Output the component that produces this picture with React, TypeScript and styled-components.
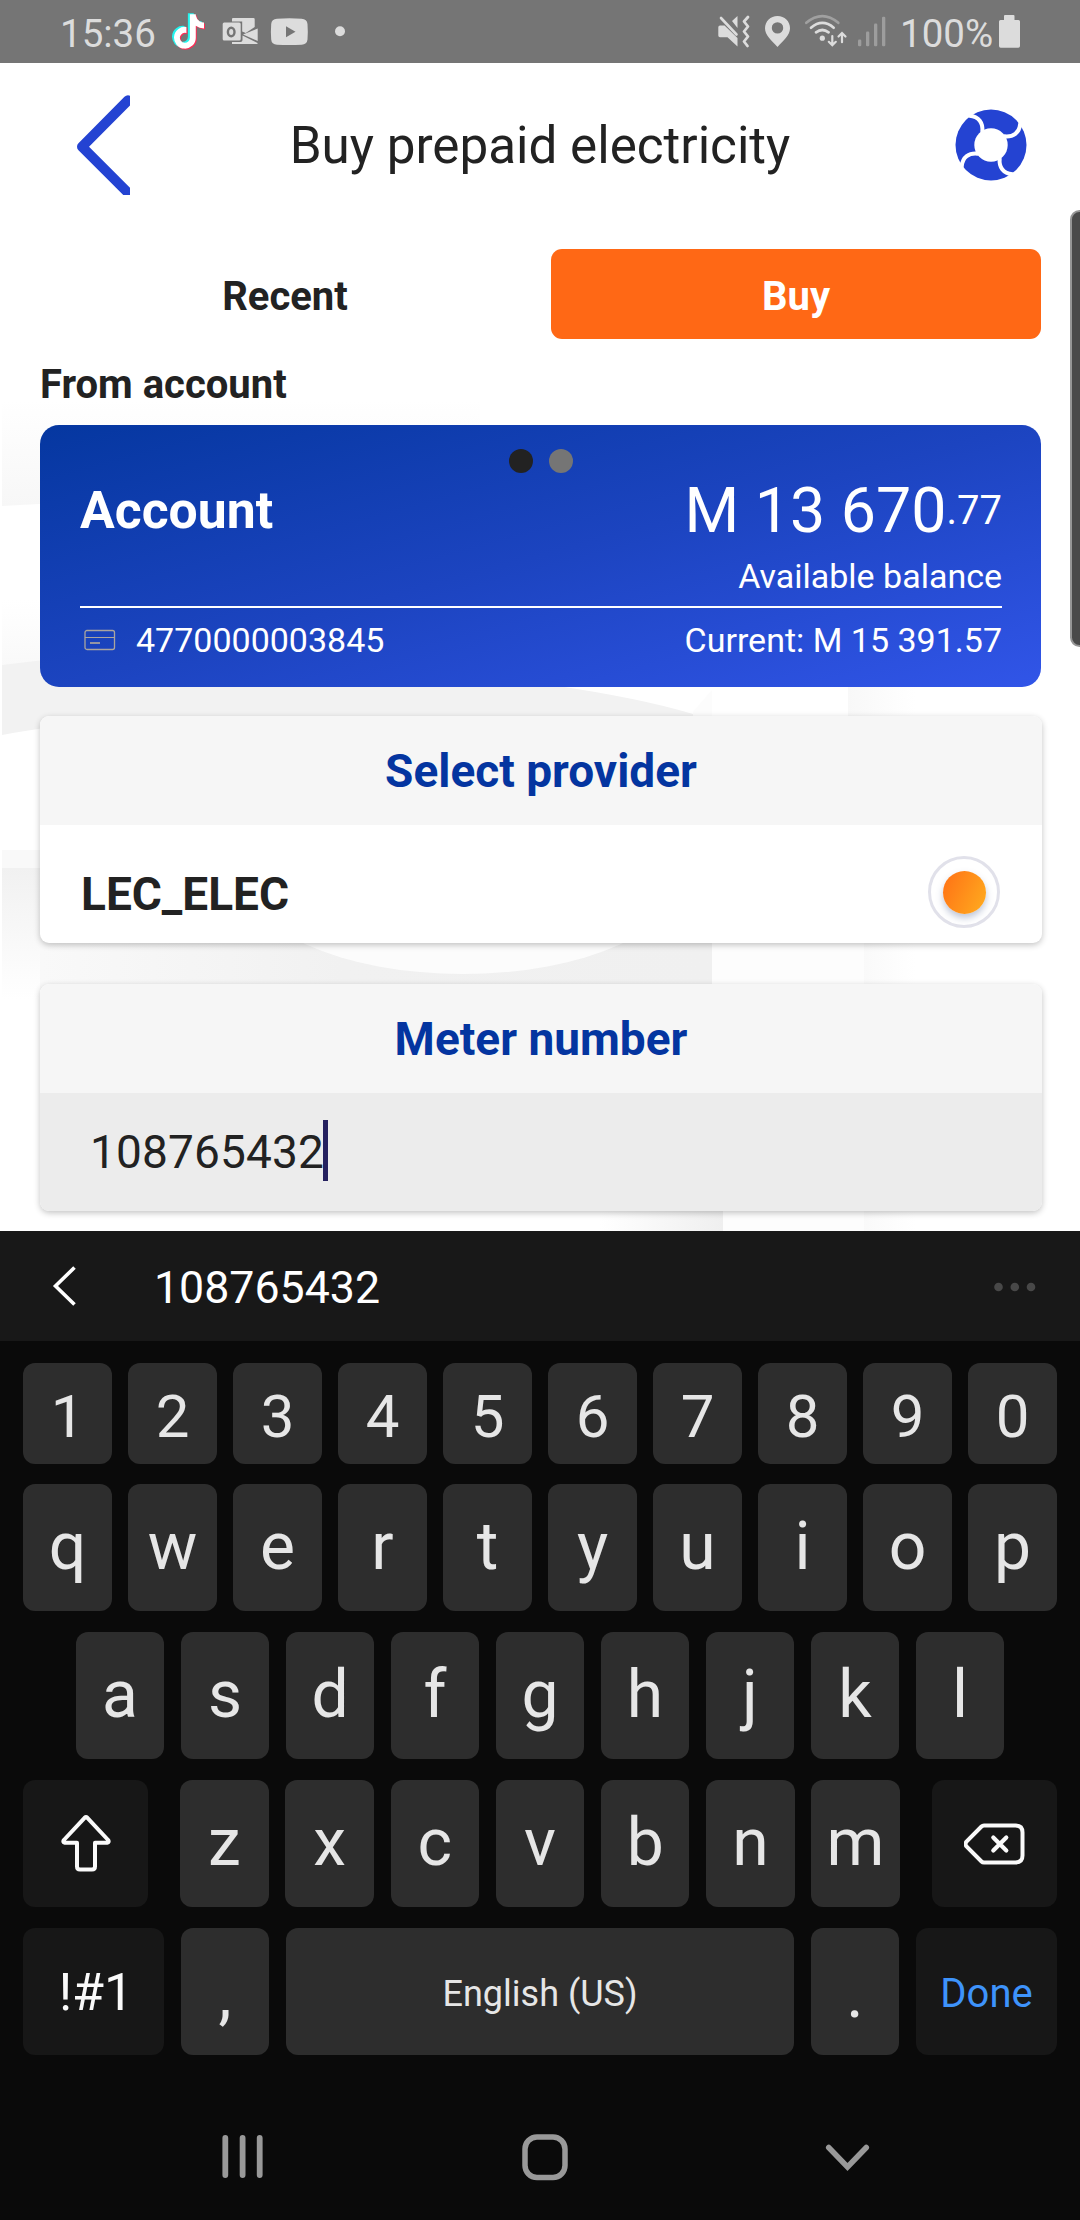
import React from 'react';
import styled, { createGlobalStyle } from 'styled-components';
import { FaTiktok } from 'react-icons/fa6';

const GlobalStyle = createGlobalStyle`
  * { box-sizing: border-box; }
  body { margin: 0; background: #ffffff; }
`;

const Screen = styled.div`
  position: relative;
  width: 1080px;
  height: 2220px;
  display: flex;
  flex-direction: column;
  overflow: hidden;
  background: #fff;
  color: #222;
  font-family: Roboto, 'Liberation Sans', sans-serif;
  white-space: nowrap;
`;

/* ---------- status bar ---------- */

const StatusBar = styled.div`
  flex: none;
  height: 63px;
  display: flex;
  align-items: flex-start;
  justify-content: space-between;
  padding: 0 58px 0 60px;
  background: #757575;
  color: #dcdcdc;
`;

const StatusGroup = styled.div`
  display: flex;
  align-items: flex-start;
  height: 63px;
`;

const StatusText = styled.span<{ $width: number; $indent?: number }>`
  width: ${(p) => p.$width}px;
  padding-left: ${(p) => p.$indent ?? 0}px;
  font-size: 38.500px;
  line-height: 68px;
`;

const StatusSvg = styled.svg`
  display: block;
  flex: none;
`;

const TikTok = styled.span`
  position: relative;
  width: 51px;
  height: 63px;
`;

const TikTokLayer = styled(FaTiktok)<{ $dx: number; $dy: number }>`
  position: absolute;
  left: ${(p) => 5 + p.$dx}px;
  top: ${(p) => 14 + p.$dy}px;
  width: 30px;
  height: 35px;
`;

/* ---------- app page ---------- */

const Page = styled.main`
  position: relative;
  flex: none;
  height: 1168px;
  display: flex;
  flex-direction: column;
  padding: 0 39px 0 40px;
`;

const Backdrop = styled.svg`
  position: absolute;
  left: 0;
  top: 0;
`;

const Header = styled.header`
  position: relative;
  height: 186px;
  display: flex;
  align-items: flex-start;
  justify-content: space-between;
  padding: 31px 13px 0 37px;
`;

const Title = styled.h1`
  margin: 0;
  padding-right: 4px;
  font-size: 51.200px;
  font-weight: 400;
  line-height: 104px;
`;

const Tabs = styled.div`
  position: relative;
  display: grid;
  grid-template-columns: 490px 490px;
  justify-content: space-between;
  height: 90px;
`;

const Tab = styled.button<{ $active?: boolean }>`
  border: 0;
  border-radius: 11px;
  padding: 5px 0 0;
  background: ${(p) => (p.$active ? '#ff6815' : 'transparent')};
  color: ${(p) => (p.$active ? '#fff' : '#222')};
  font: 700 40px/85px Roboto, sans-serif;
`;

const SectionLabel = styled.div`
  position: relative;
  height: 86px;
  padding-top: 5px;
  font-size: 40px;
  font-weight: 700;
  line-height: 82px;
`;

const AccountCard = styled.section`
  position: relative;
  height: 262px;
  width: 1001px;
  padding: 24px 39px 0 40px;
  border-radius: 19px;
  background: linear-gradient(165deg, #0537a0 0%, #1c44c0 50%, #3155e8 100%);
  color: #fff;
`;

const Pager = styled.div`
  display: flex;
  justify-content: center;
  gap: 16px;
  height: 24px;
`;

const PagerDot = styled.i<{ $on?: boolean }>`
  width: 24px;
  height: 24px;
  border-radius: 50%;
  background: ${(p) => (p.$on ? '#222' : '#757575')};
`;

const Balance = styled.div`
  display: flex;
  align-items: center;
  justify-content: space-between;
  height: 75px;
`;

const AccountName = styled.strong`
  font-size: 51.700px;
  line-height: 75px;
`;

const Amount = styled.div`
  display: flex;
  align-items: center;
  font-size: 62.700px;
  line-height: 76px;
`;

const Cents = styled.span`
  font-size: 40px;
  line-height: 75px;
`;

const Caption = styled.div`
  height: 58px;
  text-align: right;
  font-size: 34px;
  line-height: 57px;
`;

const AccountFoot = styled.div`
  display: flex;
  align-items: center;
  justify-content: space-between;
  height: 66px;
  border-top: 2px solid #fff;
  font-size: 34px;
`;

const AccountNumber = styled.span`
  display: flex;
  align-items: center;
  gap: 20px;
  padding-left: 4px;
`;

const Panel = styled.section<{ $gap: number }>`
  position: relative;
  width: 1002px;
  height: 227px;
  margin-top: ${(p) => p.$gap}px;
  border-radius: 9px;
  background: #fff;
  box-shadow: 0 2px 6px rgba(0, 0, 0, 0.24);
  overflow: hidden;
`;

const PanelTitle = styled.h2`
  margin: 0;
  height: 109px;
  background: #f6f6f6;
  color: #0435a0;
  text-align: center;
  font-size: 46px;
  font-weight: 700;
  line-height: 110px;
`;

const Provider = styled.div`
  display: flex;
  align-items: center;
  justify-content: space-between;
  height: 118px;
  padding: 20px 42px 0 41px;
  font-size: 46px;
  font-weight: 700;
`;

const Radio = styled.span`
  display: flex;
  align-items: center;
  justify-content: center;
  width: 72px;
  height: 72px;
  margin-top: -4px;
  border: 3px solid #e1e1ea;
  border-radius: 50%;

  &::after {
    content: '';
    width: 43px;
    height: 43px;
    border-radius: 50%;
    background: linear-gradient(115deg, #ff7015, #ffad1f);
    box-shadow: 0 4px 7px rgba(70, 90, 140, 0.35);
  }
`;

const MeterField = styled.div`
  display: flex;
  align-items: center;
  height: 118px;
  padding: 0 0 1px 50px;
  background: #ececec;
  font-size: 46px;
  letter-spacing: 0.150px;
`;

const Caret = styled.i`
  width: 5px;
  height: 61px;
  margin: 0 0 3px -1px;
  background: #25215f;
`;

const EdgeHandle = styled.div`
  position: absolute;
  right: -9px;
  top: 210px;
  width: 19px;
  height: 437px;
  border: 2px solid #969696;
  border-radius: 12px;
  background: #4a4a4a;
`;

/* ---------- keyboard ---------- */

const Keyboard = styled.section`
  flex: 1;
  display: flex;
  flex-direction: column;
  background: #0a0a0a;
`;

const Suggestions = styled.div`
  display: flex;
  align-items: center;
  height: 110px;
  padding: 2px 43px 0 51px;
  background: #181818;
  color: #fff;
  font-size: 44.700px;
`;

const Suggestion = styled.span`
  flex: 1;
  padding: 2px 0 0 75px;
`;

const Keys = styled.div`
  display: flex;
  flex-direction: column;
  gap: 21px;
  padding: 22px 23px 0;
`;

const KeyRow = styled.div<{ $height: number; $gap: number; $inset?: number; $pull?: number }>`
  display: flex;
  height: ${(p) => p.$height}px;
  gap: ${(p) => p.$gap}px;
  padding: 0 ${(p) => p.$inset ?? 0}px;
  margin-top: ${(p) => p.$pull ?? 0}px;
`;

const Key = styled.button<{
  $w: number;
  $size?: number;
  $shift?: number;
  $indent?: number;
  $special?: boolean;
  $color?: string;
}>`
  flex: none;
  display: flex;
  align-items: center;
  justify-content: center;
  width: ${(p) => p.$w}px;
  height: 100%;
  border: 0;
  border-radius: 12px;
  padding: ${(p) => Math.max(0, p.$shift ?? 0)}px 0 ${(p) => Math.max(0, -(p.$shift ?? 0))}px ${(p) => p.$indent ?? 0}px;
  background: ${(p) => (p.$special ? '#171717' : '#2d2d2d')};
  color: ${(p) => p.$color ?? '#e6e6e6'};
  font-family: Roboto, sans-serif;
  font-size: ${(p) => p.$size ?? 66}px;
  line-height: 1;
`;

const LowRow = styled(KeyRow)`
  justify-content: space-between;
`;

const LetterRun = styled.div`
  display: flex;
  gap: 16.800px;
`;

const NavBar = styled.nav`
  display: flex;
  justify-content: space-between;
  align-items: center;
  padding: 78px 209px 0 220px;
`;

/* ---------- icons ---------- */

const OutlookIcon = () => (
  <StatusSvg width="48" height="63" viewBox="219 0 48 63">
    <path d="M233 18h20.500a1.200 1.200 0 0 1 1.200 1.200V27l-9 6-3.500-1.500V21.500H232v-2.500a1 1 0 0 1 1-1z" fill="#dcdcdc" />
    <path d="M243 34.500l14.700-6v12.500z M232 42h8.500a2 2 0 0 0 2-2v-4.500L257.500 43v1H232z" fill="#dcdcdc" />
    <rect x="222.700" y="22.500" width="18" height="18" rx="1.500" fill="#dcdcdc" />
    <ellipse cx="231.200" cy="32" rx="3.300" ry="4.200" fill="none" stroke="#757575" strokeWidth="2.400" />
  </StatusSvg>
);

const YouTubeIcon = () => (
  <StatusSvg width="60" height="63" viewBox="267 0 60 63">
    <path d="M277 18.700q12.300-.800 24.600 0q5.400.300 5.900 5.300q.600 7.500 0 15.500q-.500 5-5.900 5.300q-12.300.600-24.600 0q-5.400-.300-5.800-5.300q-.600-8 0-15.500q.400-5 5.800-5.300z" fill="#dcdcdc" />
    <path d="M286 26.300l9.500 5.500-9.500 5.400z" fill="#757575" />
  </StatusSvg>
);

const MoreDot = () => (
  <StatusSvg width="20" height="63" viewBox="327 0 20 63">
    <circle cx="340" cy="31.200" r="5" fill="#dcdcdc" />
  </StatusSvg>
);

const MuteVibrateIcon = () => (
  <StatusSvg width="45" height="63" viewBox="715 0 45 63">
    <path d="M720 25.500h4.500L737.500 38v8.500L727.500 37.300H720a1.700 1.700 0 0 1-1.700-1.700v-8.400a1.700 1.700 0 0 1 1.700-1.700z M732 21l5.500-5v12z" fill="#dcdcdc" />
    <path d="M721 18l15.500 16.500" stroke="#dcdcdc" strokeWidth="2.600" strokeLinecap="round" />
    <path d="M748 17l-4 4.500 4 5-4 5 4 5-4 5 3.500 4.500" fill="none" stroke="#dcdcdc" strokeWidth="2.800" strokeLinecap="round" strokeLinejoin="round" />
  </StatusSvg>
);

const PinIcon = () => (
  <StatusSvg width="40" height="63" viewBox="760 0 40 63">
    <path fillRule="evenodd" d="M777.500 16c7 0 12.500 5.400 12.500 12.300 0 7-6.500 12.200-12.500 18.700-6-6.500-12.500-11.700-12.500-18.700C765 21.400 770.500 16 777.500 16zm0 6.200a5.700 5.700 0 1 0 0 11.400 5.700 5.700 0 0 0 0-11.400z" fill="#dcdcdc" />
  </StatusSvg>
);

const WifiIcon = () => (
  <StatusSvg width="52" height="63" viewBox="800 0 52 63" fill="none" strokeWidth="2.700" strokeLinecap="round">
    <path d="M806.300 22.800q16-13.400 32 0" stroke="#a0a0a0" />
    <path d="M811 27.700q11.300-9.500 22.700 0M816 32.300q6.300-4.600 12.600 0" stroke="#dcdcdc" />
    <circle cx="822.300" cy="38.200" r="2.600" fill="#dcdcdc" />
    <path d="M832.300 36v9M828.800 41.800l3.500 3.500 3.500-3.500M842 42.200v-9M838.500 36.500l3.500-3.500 3.500 3.500" stroke="#dcdcdc" strokeWidth="2.200" />
  </StatusSvg>
);

const SignalIcon = () => (
  <StatusSvg width="46" height="63" viewBox="852 0 46 63" fill="#9d9d9d">
    <rect x="858" y="39.500" width="3.300" height="6.700" rx="1.300" />
    <rect x="866" y="31.500" width="3.300" height="14.700" rx="1.300" />
    <rect x="874" y="23.500" width="3.300" height="22.700" rx="1.300" />
    <rect x="882" y="16.700" width="3.300" height="29.500" rx="1.300" />
  </StatusSvg>
);

const BatteryIcon = () => (
  <StatusSvg width="24" height="63" viewBox="998 0 24 63">
    <path d="M1006 15h7.500a1 1 0 0 1 1 1v4h4a1.500 1.500 0 0 1 1.500 1.500v24.500a1.700 1.700 0 0 1-1.700 1.700h-17.600a1.700 1.700 0 0 1-1.700-1.700V21.500a1.500 1.500 0 0 1 1.500-1.500h3.500v-4a1 1 0 0 1 1-1z" fill="#dcdcdc" />
  </StatusSvg>
);

const BackIcon = () => (
  <svg width="53" height="101" viewBox="77 94 53 101">
    <path d="M128 100.300L82 146.700L128 192.700" fill="none" stroke="#2443d2" strokeWidth="10" strokeLinecap="round" strokeLinejoin="round" />
  </svg>
);

const SWIRL = 'M-21.500-29.300C-12-28.500-7.800-22-8.700-13.500';

const LogoIcon = () => (
  <svg width="74" height="102" viewBox="-37 -51 74 102">
    <circle r="35.500" fill="#2443d2" />
    <circle r="16.700" fill="#fff" />
    {[0, 90, 180, 270].map((angle) => (
      <path key={angle} d={SWIRL} transform={`rotate(${angle})`} fill="none" stroke="#fff" strokeWidth="4" strokeLinecap="round" />
    ))}
  </svg>
);

const CardIcon = () => (
  <svg width="32" height="22" viewBox="0 0 32 22" fill="none" stroke="#aaa59f">
    <rect x="1" y="1.500" width="29.500" height="19" rx="2" strokeWidth="1.300" />
    <path d="M1 8.500h30" strokeWidth="1" />
    <path d="M6 14h10" strokeWidth="1.700" />
  </svg>
);

const PageBackdrop = () => (
  <Backdrop width="1080" height="1168" viewBox="0 63 1080 1168">
    <defs>
      <linearGradient id="haze" x1="0" y1="0" x2="0" y2="1">
        <stop offset="0" stopColor="#fff" />
        <stop offset="1" stopColor="#f7f7f7" />
      </linearGradient>
      <linearGradient id="bowl" x1="0" y1="0" x2="0" y2="1">
        <stop offset="0" stopColor="#f1f1f1" />
        <stop offset="1" stopColor="#fff" />
      </linearGradient>
      <linearGradient id="sweep" x1="0" y1="0" x2="1" y2="0">
        <stop offset="0" stopColor="#f9f9f9" />
        <stop offset="0.450" stopColor="#f1f1f1" />
        <stop offset="1" stopColor="#f0f0f0" />
      </linearGradient>
      <linearGradient id="column" x1="0" y1="0" x2="1" y2="0">
        <stop offset="0" stopColor="#f8f8f8" />
        <stop offset="1" stopColor="#fff" />
      </linearGradient>
      <linearGradient id="stem" x1="0" y1="0" x2="1" y2="0">
        <stop offset="0" stopColor="#fff" />
        <stop offset="1" stopColor="#efefef" />
      </linearGradient>
    </defs>
    <path d="M2 400H480V480L2 506z" fill="url(#haze)" />
    <path d="M2 600H200V690H2z" fill="url(#haze)" />
    <path d="M2 665C200 640 420 640 551 685Q640 698 693 714V760H300C180 715 80 720 2 735z" fill="#f2f2f2" />
    <path d="M693 712L712 690V984H693z" fill="#fcfcfc" />
    <path d="M2 850H300V880H2z" fill="#f9f9f9" />
    <path d="M2 868H40V1000H2z" fill="url(#bowl)" />
    <path d="M40 868H712V990H40z" fill="url(#sweep)" />
    <ellipse cx="463" cy="874" rx="221" ry="100" fill="#fcfcfc" />
    <path d="M712 900H864V1231H712z" fill="#fdfdfd" />
    <path d="M848 687H915V860H848z M864 860H915V1231H864z" fill="url(#column)" />
    <path d="M600 1150H723V1231H600z" fill="url(#stem)" />
  </Backdrop>
);

const ShiftIcon = () => (
  <svg width="50" height="58" viewBox="0 0 50 58">
    <path d="M23.600 2.800L2.900 25q-1.500 2.200 1 2.700H16V51.500q0 3 3 3h12q3 0 3-3V27.700H46.100q2.500-.500 1-2.700L26.400 2.800q-1.400-1.300-2.800 0z" fill="none" stroke="#fafafa" strokeWidth="4" strokeLinejoin="round" />
  </svg>
);

const DeleteIcon = () => (
  <svg width="62" height="44" viewBox="0 0 62 44">
    <path d="M20 3.500h31.500q7 0 7 7v23q0 7-7 7H20q-1.500 0-2.500-1L2.500 24.500q-2-2.500 0-5L17.500 4.500q1-1 2.500-1z" fill="none" stroke="#fafafa" strokeWidth="4" />
    <path d="M29.300 15.500l13 13M42.300 15.500l-13 13" stroke="#fafafa" strokeWidth="4.200" strokeLinecap="round" />
  </svg>
);

const digits = '1234567890'.split('');
const topLetters = 'qwertyuiop'.split('');
const midLetters = 'asdfghjkl'.split('');
const lowLetters = 'zxcvbnm'.split('');

export default function App() {
  return (
    <>
      <GlobalStyle />
      <Screen>
        <StatusBar>
          <StatusGroup>
            <StatusText $width={108}>15:36</StatusText>
            <TikTok>
              <TikTokLayer $dx={-0.8} $dy={-0.8} color="#25f4ee" />
              <TikTokLayer $dx={1.8} $dy={1.2} color="#fe2c55" />
              <TikTokLayer $dx={0.5} $dy={0.2} color="#fff" />
            </TikTok>
            <OutlookIcon />
            <YouTubeIcon />
            <MoreDot />
          </StatusGroup>
          <StatusGroup>
            <MuteVibrateIcon />
            <PinIcon />
            <WifiIcon />
            <SignalIcon />
            <StatusText $width={100} $indent={2}>100%</StatusText>
            <BatteryIcon />
          </StatusGroup>
        </StatusBar>

        <Page>
          <PageBackdrop />
          <Header>
            <BackIcon />
            <Title>Buy prepaid electricity</Title>
            <LogoIcon />
          </Header>
          <Tabs>
            <Tab>Recent</Tab>
            <Tab $active>Buy</Tab>
          </Tabs>
          <SectionLabel>From account</SectionLabel>
          <AccountCard>
            <Pager>
              <PagerDot $on />
              <PagerDot />
            </Pager>
            <Balance>
              <AccountName>Account</AccountName>
              <Amount>
                M 13 670<Cents>.77</Cents>
              </Amount>
            </Balance>
            <Caption>Available balance</Caption>
            <AccountFoot>
              <AccountNumber>
                <CardIcon />
                4770000003845
              </AccountNumber>
              <span>Current: M 15 391.57</span>
            </AccountFoot>
          </AccountCard>
          <Panel $gap={29}>
            <PanelTitle>Select provider</PanelTitle>
            <Provider>
              LEC_ELEC
              <Radio />
            </Provider>
          </Panel>
          <Panel $gap={41}>
            <PanelTitle>Meter number</PanelTitle>
            <MeterField>
              108765432
              <Caret />
            </MeterField>
          </Panel>
        </Page>

        <Keyboard>
          <Suggestions>
            <svg width="28" height="44" viewBox="0 0 28 44">
              <path d="M23.500 2.500L4.500 21l19 18.500" fill="none" stroke="#fff" strokeWidth="3.600" />
            </svg>
            <Suggestion>108765432</Suggestion>
            <svg width="44" height="12" viewBox="0 0 44 12" fill="#484848">
              <circle cx="5.500" cy="6" r="4.300" />
              <circle cx="21.800" cy="6" r="4.300" />
              <circle cx="38" cy="6" r="4.300" />
            </svg>
          </Suggestions>
          <Keys>
            <KeyRow $height={101} $gap={16}>
              {digits.map((d) => (
                <Key key={d} $w={89} $size={60} $shift={6}>{d}</Key>
              ))}
            </KeyRow>
            <KeyRow $height={127} $gap={16} $pull={-1}>
              {topLetters.map((l) => (
                <Key key={l} $w={89} $shift={-2}>{l}</Key>
              ))}
            </KeyRow>
            <KeyRow $height={127} $gap={17} $inset={53}>
              {midLetters.map((l) => (
                <Key key={l} $w={88} $shift={-2}>{l}</Key>
              ))}
            </KeyRow>
            <LowRow $height={127} $gap={0}>
              <Key $w={125} $special aria-label="Shift"><ShiftIcon /></Key>
              <LetterRun>
                {lowLetters.map((l) => (
                  <Key key={l} $w={88.4} $shift={-2}>{l}</Key>
                ))}
              </LetterRun>
              <Key $w={125} $indent={2} $special aria-label="Delete"><DeleteIcon /></Key>
            </LowRow>
            <KeyRow $height={127} $gap={17}>
              <Key $w={141} $size={52} $shift={2} $indent={5} $special $color="#fafafa">!#1</Key>
              <Key $w={88} $shift={7}>,</Key>
              <Key $w={508} $size={36} $shift={4}>English (US)</Key>
              <Key $w={88} $shift={7}>.</Key>
              <Key $w={141} $size={40} $shift={5} $special $color="#3e93fb">Done</Key>
            </KeyRow>
          </Keys>
          <NavBar>
            <svg width="46" height="48" viewBox="220 2133 46 48" stroke="#999" strokeWidth="5.800" strokeLinecap="round">
              <path d="M225.300 2138v37M242.600 2138v37M259.700 2138v37" />
            </svg>
            <svg width="50" height="48" viewBox="520 2132 50 48">
              <rect x="525" y="2136" width="40" height="40.500" rx="12" fill="none" stroke="#999" strokeWidth="5.500" />
            </svg>
            <svg width="48" height="48" viewBox="823 2133 48 48">
              <path d="M828.700 2147.500L847.500 2167L866.300 2147.500" fill="none" stroke="#999" strokeWidth="5.500" strokeLinecap="round" />
            </svg>
          </NavBar>
        </Keyboard>
        <EdgeHandle />
      </Screen>
    </>
  );
}
